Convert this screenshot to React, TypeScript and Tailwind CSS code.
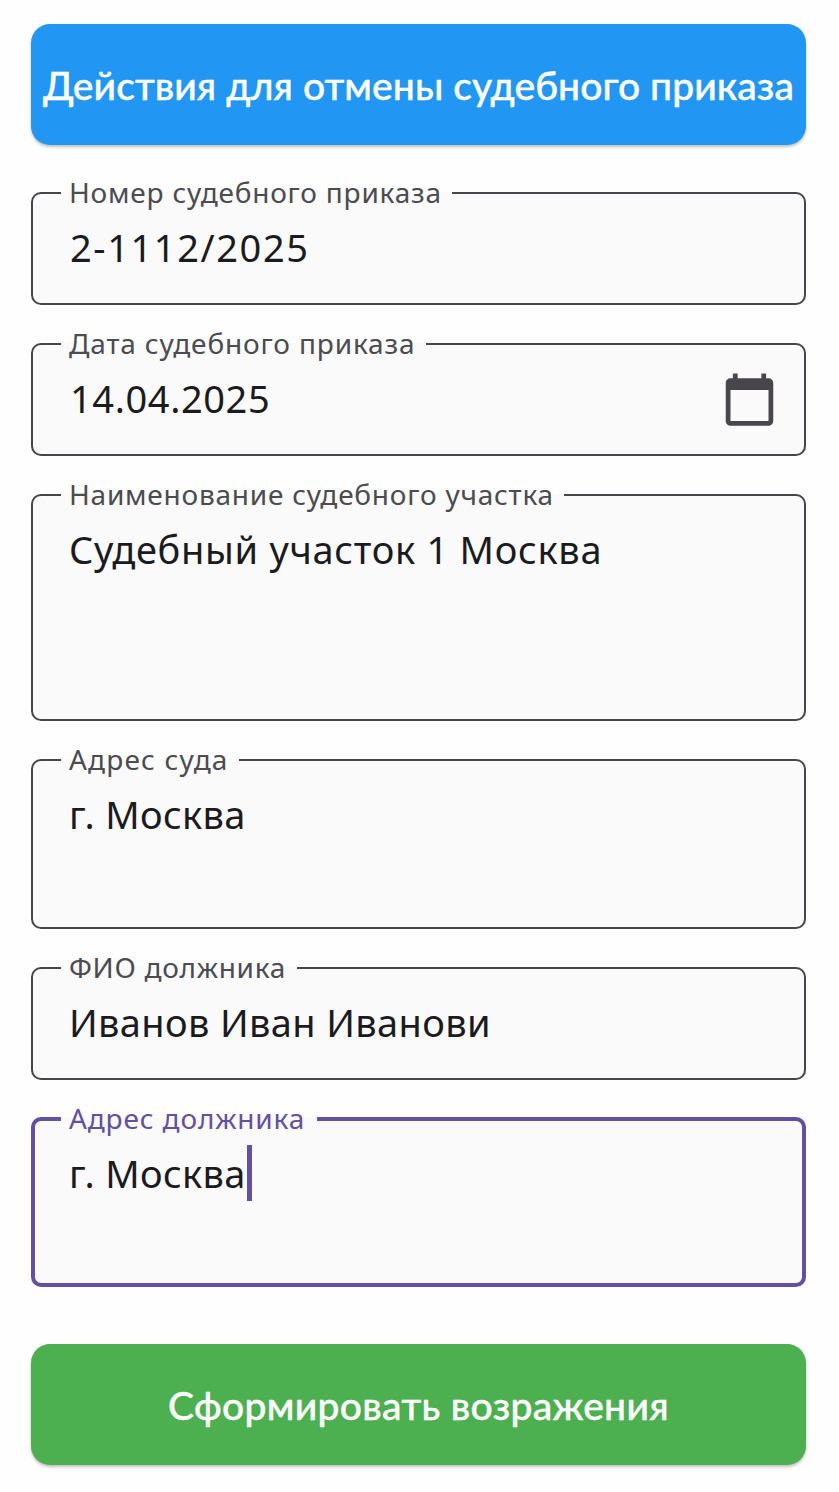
import type { ReactNode } from 'react';
import clsx from 'clsx';
import { MdCalendarToday } from 'react-icons/md';

type FieldProps = {
  label: string;
  value: string;
  height: string;
  legendClass: string;
  valueClass: string;
  focused?: boolean;
  icon?: ReactNode;
};

function Field({ label, value, height, legendClass, valueClass, focused, icon }: FieldProps) {
  return (
    <fieldset
      className={clsx(
        'min-w-0 rounded-[10px] bg-[#fafafa]',
        focused ? 'border-4 border-[#6350a0] pl-[26px]' : 'border-2 border-[#45454a] pl-7',
        height
      )}
    >
      <legend
        className={clsx(
          'h-[30px] pl-2 text-[28px] leading-[28px] whitespace-nowrap',
          focused ? 'text-[#6350a0]' : 'text-[#4b4b50]',
          legendClass
        )}
      >
        {label}
      </legend>
      <div className="flex items-start justify-between pr-[26px] pl-2">
        <div className="flex pt-[11px]">
          <span className={clsx('text-[38px] leading-[56px] whitespace-nowrap text-[#1b1b1f]', valueClass)}>
            {value}
          </span>
          {focused && <span className="ml-px h-14 w-[5px] bg-[#6350a0]" />}
        </div>
        {icon}
      </div>
    </fieldset>
  );
}

export default function App() {
  return (
    <main className="flex h-[1492px] w-[839px] flex-col bg-[#fefefe] pt-6 pr-[33px] pl-[31px] font-['Noto_Sans',sans-serif]">
      <button className="h-[120.5px] shrink-0 rounded-[19px] bg-[#2196f3] pt-0.5 font-['Lato','Noto_Sans',sans-serif] text-[39px] font-medium tracking-[0.08px] whitespace-nowrap text-white shadow-[0_2px_3px_rgba(0,0,0,0.25)] [-webkit-text-stroke:0.4px_white]">
        Действия для отмены судебного приказа
      </button>

      <form className="mt-[33.5px] flex flex-col gap-6">
        <Field
          label="Номер судебного приказа"
          value="2-1112/2025"
          height="h-[127px]"
          legendClass="w-[391px] tracking-[0.79px]"
          valueClass="pl-px tracking-[1.6px]"
        />
        <Field
          label="Дата судебного приказа"
          value="14.04.2025"
          height="h-[127px]"
          legendClass="w-[365px] tracking-[0.86px]"
          valueClass="pl-px tracking-[0.6px]"
          icon={<MdCalendarToday className="mt-3 size-[57px] text-[#48464c]" />}
        />
        <Field
          label="Наименование судебного участка"
          value="Судебный участок 1 Москва"
          height="h-[241px]"
          legendClass="w-[503px] tracking-[0.77px]"
          valueClass="tracking-[0.7px]"
        />
        <Field
          label="Адрес суда"
          value="г. Москва"
          height="h-[183.5px]"
          legendClass="w-[178px] tracking-[1.2px]"
          valueClass="tracking-[0.35px]"
        />
        <Field
          label="ФИО должника"
          value="Иванов Иван Иванови"
          height="h-[127.5px]"
          legendClass="w-[236px] tracking-[0.72px]"
          valueClass="tracking-[0.35px]"
        />
        <Field
          label="Адрес должника"
          value="г. Москва"
          height="h-[183px]"
          legendClass="w-[256px] tracking-[0.86px]"
          valueClass="tracking-[0.35px]"
          focused
        />
      </form>

      <button className="mt-[57px] h-[121px] shrink-0 rounded-[19px] bg-[#4caf50] pt-0.5 font-['Lato','Noto_Sans',sans-serif] text-[39px] font-medium tracking-[0.33px] whitespace-nowrap text-white shadow-[0_2px_3px_rgba(0,0,0,0.25)] [-webkit-text-stroke:0.4px_white]">
        Сформировать возражения
      </button>
    </main>
  );
}
